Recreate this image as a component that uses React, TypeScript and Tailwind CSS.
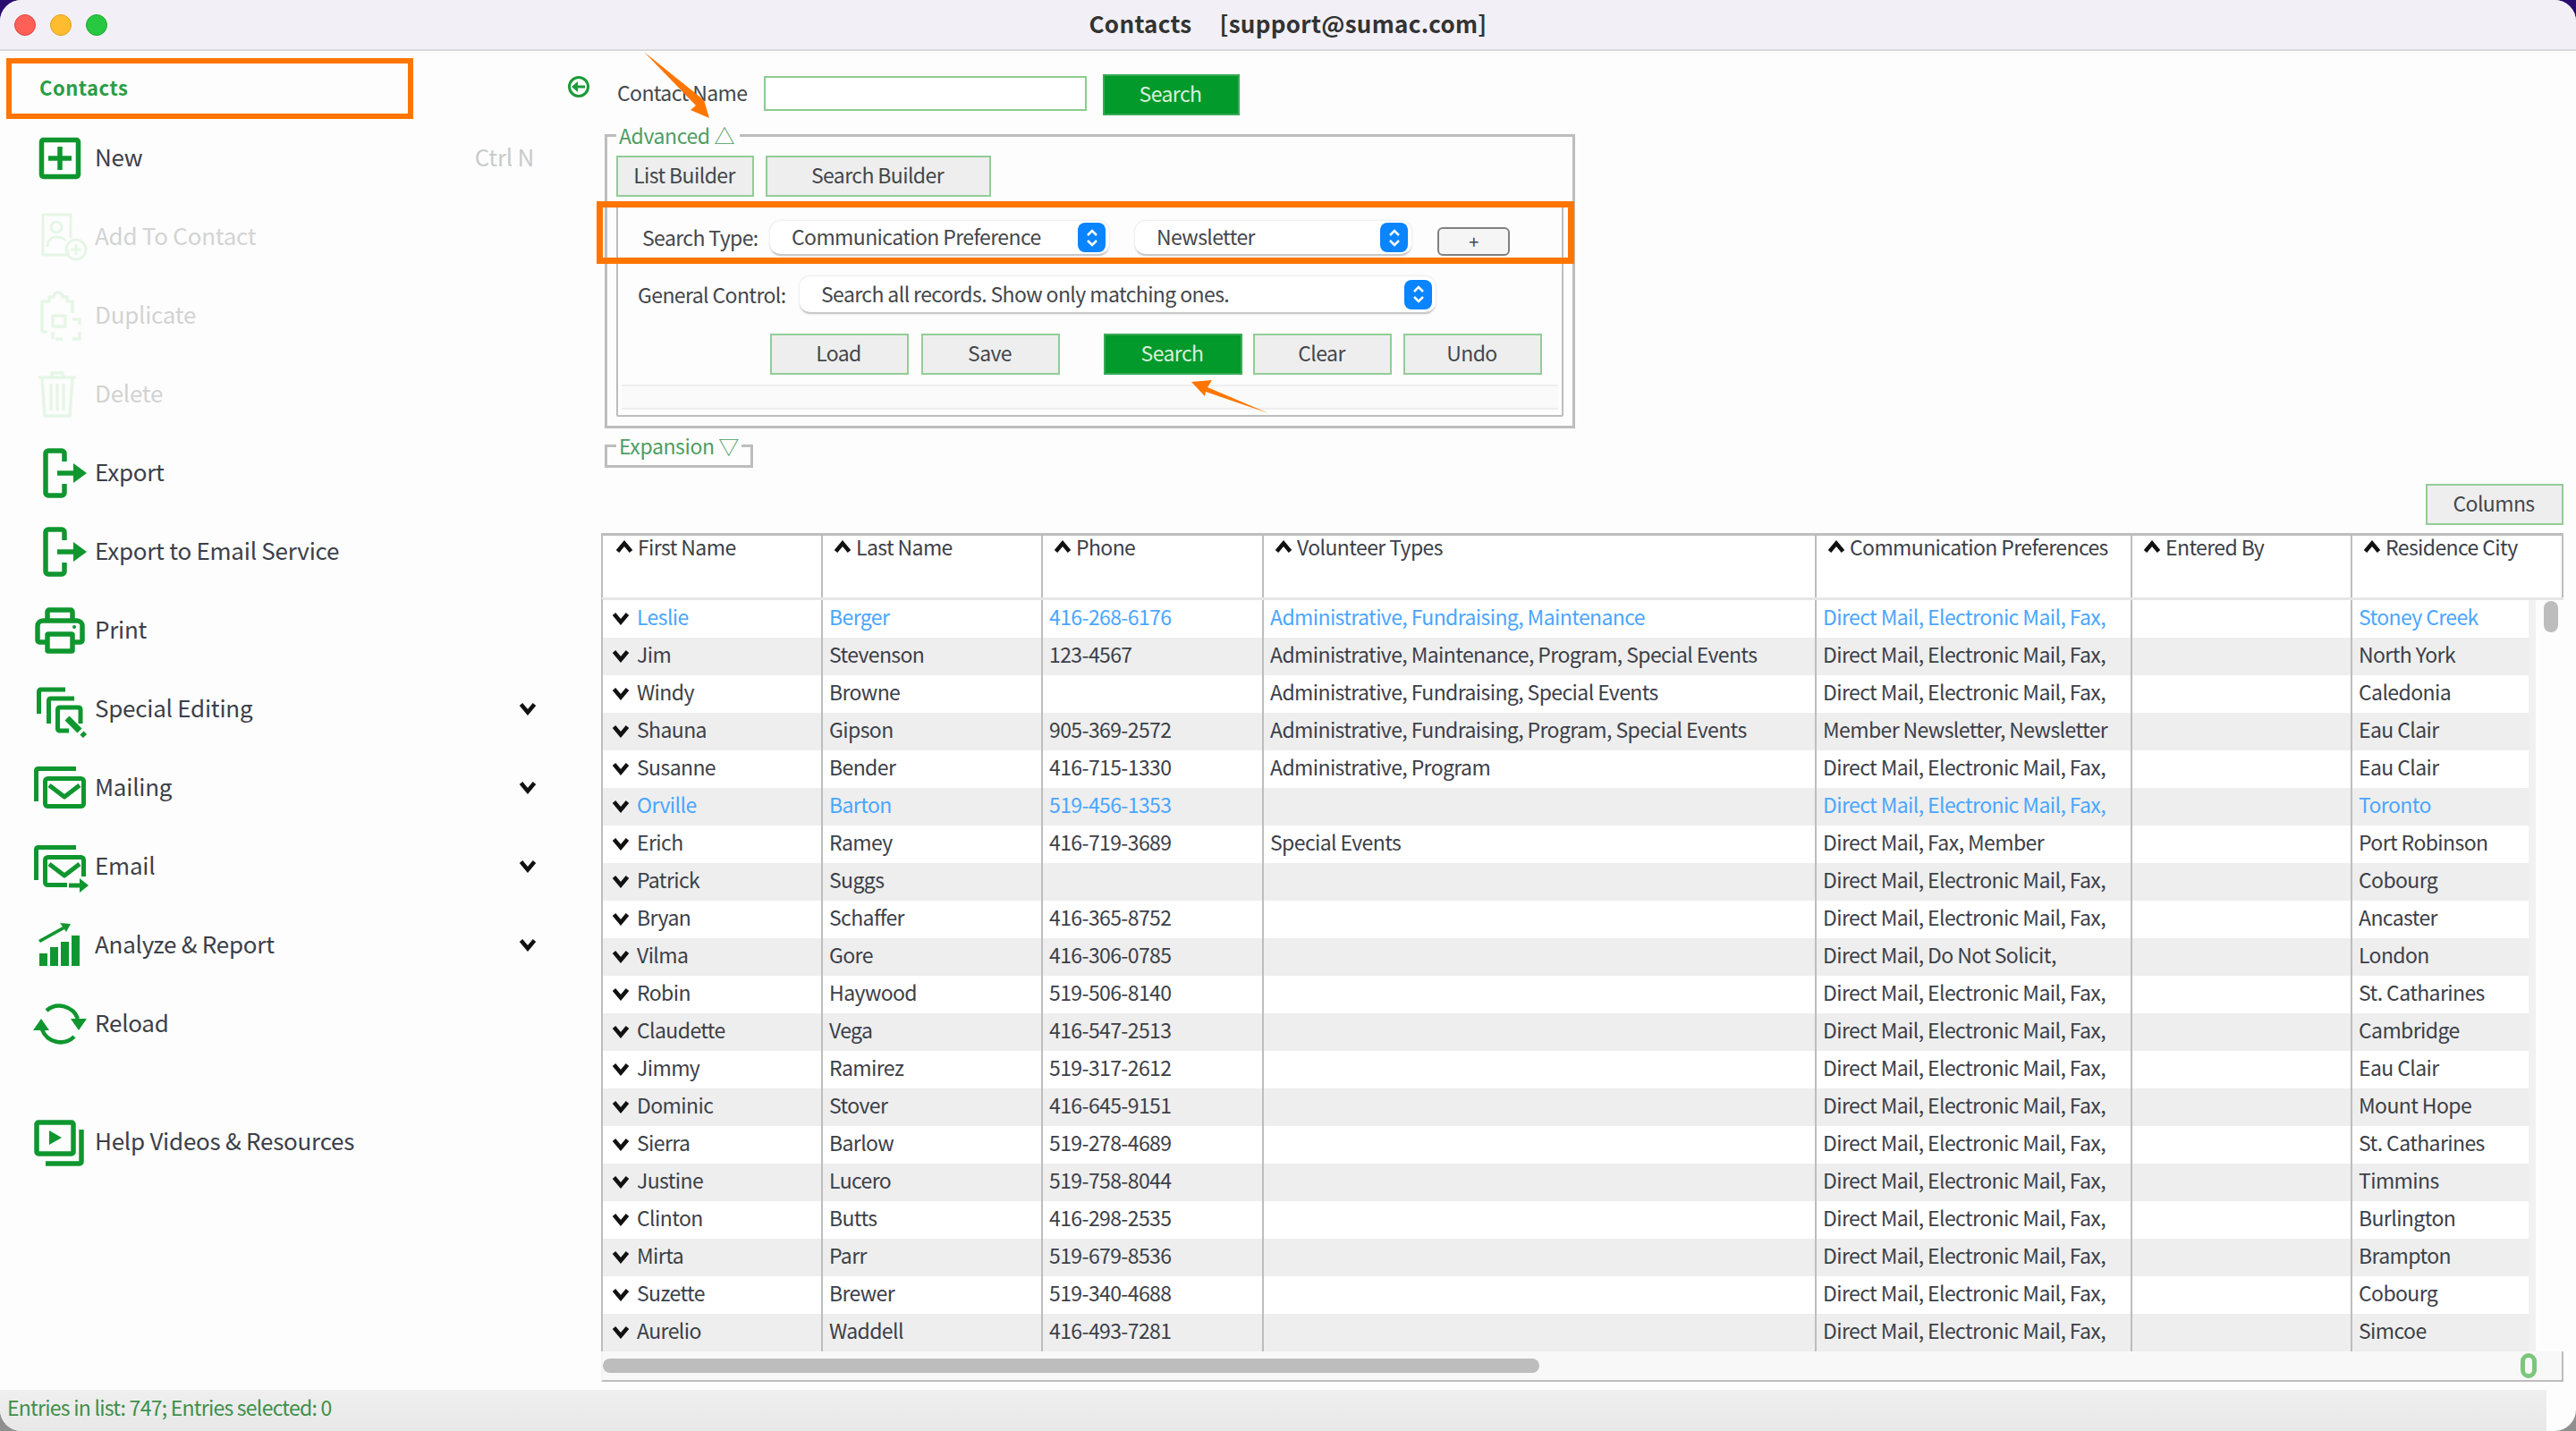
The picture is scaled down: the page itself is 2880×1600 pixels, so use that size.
import React from 'react';

const FONT = "font-['Noto_Sans_CJK_SC','Liberation_Sans',sans-serif]";

type IconProps = { className?: string };

function IconBox({ className, children }: IconProps & { children: React.ReactNode }) {
  return (
    <svg viewBox="0 0 64 64" className={`w-[64px] h-[64px] ${className ?? ''}`} fill="none" stroke="currentColor" strokeWidth="5" strokeLinejoin="round">
      {children}
    </svg>
  );
}

const NewIcon = (p: IconProps) => (
  <IconBox {...p}>
    <rect x="11.5" y="11.5" width="41" height="41" rx="2" strokeWidth="5.5" />
    <path d="M32 19v26M19 32h26" strokeWidth="5.5" />
  </IconBox>
);
const AddContactIcon = (p: IconProps) => (
  <IconBox {...p}>
    <g strokeWidth="3">
      <path d="M41 46v6H13V7h31v26" />
      <circle cx="28" cy="21" r="6" />
      <path d="M18 43c0-8 5-11 10-11s8 1 10 4" />
      <circle cx="50" cy="46" r="11" />
      <path d="M50 40v12M44 46h12" />
    </g>
  </IconBox>
);
const DuplicateIcon = (p: IconProps) => (
  <IconBox {...p}>
    <g strokeWidth="3.5">
      <path d="M12 50V16h8v-5h5a5 5 0 0 1 10 0h5v5h6v13" />
      <path d="M12 50h6M27 58h8M24 32h14v12H24z" />
      <path d="M46 36h8v6M54 50v8h-8M24 50v8" />
    </g>
  </IconBox>
);
const TrashIcon = (p: IconProps) => (
  <IconBox {...p}>
    <g strokeWidth="3.5">
      <path d="M8 13h42M23 12V8h12v4M12 13l3 43h28l3-43" />
      <path d="M22 20v30M29 20v30M36 20v30" />
    </g>
  </IconBox>
);
const ExportIcon = (p: IconProps) => (
  <IconBox {...p}>
    <path d="M37 19V10a3 3 0 0 0-3-3H19a3 3 0 0 0-3 3v44a3 3 0 0 0 3 3h15a3 3 0 0 0 3-3V44" strokeWidth="5.5" />
    <path d="M29 32h20" strokeWidth="5.5" />
    <path d="M47 21l15 11-15 11z" fill="currentColor" stroke="none" />
  </IconBox>
);
const PrintIcon = (p: IconProps) => (
  <IconBox {...p}>
    <g strokeWidth="5.5">
      <path d="M18 20V11a2 2 0 0 1 2-2h24a2 2 0 0 1 2 2v9" />
      <path d="M16 45H9a2 2 0 0 1-2-2V27a6 6 0 0 1 6-6h38a6 6 0 0 1 6 6v16a2 2 0 0 1-2 2h-7" />
      <rect x="18" y="36" width="28" height="19" rx="1" />
    </g>
    <circle cx="48" cy="28" r="2" fill="currentColor" stroke="none" />
  </IconBox>
);
const SpecialIcon = (p: IconProps) => (
  <IconBox {...p}>
    <path d="M8.5 37V12a2 2 0 0 1 2-2H38" />
    <path d="M19.5 48V22a2 2 0 0 1 2-2H48" />
    <path d="M42 56H31.5a2 2 0 0 1-2-2V32a2 2 0 0 1 2-2H53a2 2 0 0 1 2 2v16" />
    <path d="M40 42l14 14" strokeWidth="7" />
    <path d="M56.5 58.5l3.5 3.5" strokeWidth="6" />
  </IconBox>
);
const MailingIcon = (p: IconProps) => (
  <IconBox {...p}>
    <path d="M5.5 47V12.5a2 2 0 0 1 2-2H50" />
    <rect x="15.5" y="21.5" width="43" height="31" rx="3" />
    <path d="M20 29l17 13 17-13" />
  </IconBox>
);
const EmailIcon = (p: IconProps) => (
  <IconBox {...p}>
    <path d="M5.5 47V12.5a2 2 0 0 1 2-2H50" />
    <path d="M40 52.5H18.5a3 3 0 0 1-3-3v-25a3 3 0 0 1 3-3h37a3 3 0 0 1 3 3V43" />
    <path d="M20 29l17 13 17-13" />
    <path d="M42 53h14" />
    <path d="M54 45l10 8-10 8z" fill="currentColor" stroke="none" />
  </IconBox>
);
const AnalyzeIcon = (p: IconProps) => (
  <IconBox {...p}>
    <g fill="currentColor" stroke="none">
      <rect x="9" y="41" width="9" height="14" />
      <rect x="21" y="34" width="9" height="21" />
      <rect x="33" y="28" width="9" height="27" />
      <rect x="45" y="21" width="9" height="34" />
      <path d="M32 7l12 1-5 9-2-3-27 15-2-3 27-15z" />
    </g>
  </IconBox>
);
const ReloadIcon = (p: IconProps) => (
  <IconBox {...p}>
    <path d="M17 17a22 22 0 0 1 35 9" strokeWidth="4.5" />
    <path d="M48 46a22 22 0 0 1-36-8" strokeWidth="4.5" />
    <g fill="currentColor" stroke="none">
      <path d="M44 26h18l-9 13z" />
      <path d="M2 39h18l-9-13z" />
    </g>
  </IconBox>
);
const HelpIcon = (p: IconProps) => (
  <IconBox {...p}>
    <rect x="6" y="10" width="41" height="35" rx="2" strokeWidth="5.5" />
    <path d="M20 19v16l14-8z" fill="currentColor" stroke="none" />
    <path d="M56 18v36a2 2 0 0 1-2 2H16" strokeWidth="5.5" />
  </IconBox>
);

function Chevron({ up, className }: { up?: boolean; className?: string }) {
  return (
    <svg viewBox="0 0 20 14" className={`w-[20px] h-[14px] shrink-0 ${className ?? ''}`} fill="none" stroke="#111" strokeWidth="4.5">
      <path d={up ? 'M2.5 12.5l7.5-9 7.5 9' : 'M2.5 1.5l7.5 9 7.5-9'} />
    </svg>
  );
}

const menu = [
  { label: 'New', Icon: NewIcon, hint: 'Ctrl N' },
  { label: 'Add To Contact', Icon: AddContactIcon, off: true },
  { label: 'Duplicate', Icon: DuplicateIcon, off: true },
  { label: 'Delete', Icon: TrashIcon, off: true },
  { label: 'Export', Icon: ExportIcon },
  { label: 'Export to Email Service', Icon: ExportIcon },
  { label: 'Print', Icon: PrintIcon },
  { label: 'Special Editing', Icon: SpecialIcon, more: true },
  { label: 'Mailing', Icon: MailingIcon, more: true },
  { label: 'Email', Icon: EmailIcon, more: true },
  { label: 'Analyze & Report', Icon: AnalyzeIcon, more: true },
  { label: 'Reload', Icon: ReloadIcon },
];

function MenuItem({ label, Icon, hint, off, more, className }: { label: string; Icon: (p: IconProps) => React.ReactElement; hint?: string; off?: boolean; more?: boolean; className?: string }) {
  return (
    <div className={`h-[88px] flex items-center pl-[35px] text-[26px] tracking-[-0.25px] ${off ? 'text-[#d3d3d3]' : 'text-[#3c4048]'} ${className ?? ''}`}>
      <Icon className={`w-[64px] h-[64px] shrink-0 mr-[7px] ${off ? 'text-[#e6f6e6]' : 'text-[#0f962f]'}`} />
      <span className="pb-[5px]">{label}</span>
      {hint && <span className="ml-auto mr-[28px] pb-[5px] text-[#c8cbcc]">{hint}</span>}
      {more && <Chevron className="ml-auto mr-[25px]" />}
    </div>
  );
}

function Btn({ label, primary, className }: { label: string; primary?: boolean; className?: string }) {
  return (
    <button
      className={`h-[46px] border-2 text-[23px] tracking-[-0.6px] pb-[3px] pr-[2px] flex items-center justify-center shrink-0 ${
        primary ? 'bg-[#029a2a] border-[#3aa957] text-[#d9f0dd]' : 'bg-[#eeeeee] border-[#93cc97] text-[#44474b]'
      } ${className ?? ''}`}
    >
      {label}
    </button>
  );
}

function Select({ value, className }: { value: string; className?: string }) {
  return (
    <div className={`flex items-center bg-white rounded-[12px] border-b-2 border-[#c9c9c9] shadow-[0_0_3px_rgba(0,0,0,0.15)] pl-[24px] pr-[4px] text-[23px] tracking-[-0.6px] text-[#44474b] shrink-0 ${className ?? ''}`}>
      <span className="pb-[2px]">{value}</span>
      <div className="ml-auto w-[31px] h-[33px] rounded-[8px] bg-[#0a84ff] flex items-center justify-center">
        <svg viewBox="0 0 16 24" className="w-[16px] h-[24px]" fill="none" stroke="#fff" strokeWidth="2.5">
          <path d="M3 9l5-5 5 5M3 15l5 5 5-5" />
        </svg>
      </div>
    </div>
  );
}

const columns = [
  { key: 'first', label: 'First Name', w: 'w-[244px]' },
  { key: 'last', label: 'Last Name', w: 'w-[246px]' },
  { key: 'phone', label: 'Phone', w: 'w-[247px]' },
  { key: 'vol', label: 'Volunteer Types', w: 'w-[618px]' },
  { key: 'comm', label: 'Communication Preferences', w: 'w-[353px]' },
  { key: 'by', label: 'Entered By', w: 'w-[246px]' },
  { key: 'city', label: 'Residence City', w: 'flex-1' },
];

const DM = 'Direct Mail, Electronic Mail, Fax,';
const rows: { c: string[]; link?: boolean }[] = [
  { c: ['Leslie', 'Berger', '416-268-6176', 'Administrative, Fundraising, Maintenance', DM, '', 'Stoney Creek'], link: true },
  { c: ['Jim', 'Stevenson', '123-4567', 'Administrative, Maintenance, Program, Special Events', DM, '', 'North York'] },
  { c: ['Windy', 'Browne', '', 'Administrative, Fundraising, Special Events', DM, '', 'Caledonia'] },
  { c: ['Shauna', 'Gipson', '905-369-2572', 'Administrative, Fundraising, Program, Special Events', 'Member Newsletter, Newsletter', '', 'Eau Clair'] },
  { c: ['Susanne', 'Bender', '416-715-1330', 'Administrative, Program', DM, '', 'Eau Clair'] },
  { c: ['Orville', 'Barton', '519-456-1353', '', DM, '', 'Toronto'], link: true },
  { c: ['Erich', 'Ramey', '416-719-3689', 'Special Events', 'Direct Mail, Fax, Member', '', 'Port Robinson'] },
  { c: ['Patrick', 'Suggs', '', '', DM, '', 'Cobourg'] },
  { c: ['Bryan', 'Schaffer', '416-365-8752', '', DM, '', 'Ancaster'] },
  { c: ['Vilma', 'Gore', '416-306-0785', '', 'Direct Mail, Do Not Solicit,', '', 'London'] },
  { c: ['Robin', 'Haywood', '519-506-8140', '', DM, '', 'St. Catharines'] },
  { c: ['Claudette', 'Vega', '416-547-2513', '', DM, '', 'Cambridge'] },
  { c: ['Jimmy', 'Ramirez', '519-317-2612', '', DM, '', 'Eau Clair'] },
  { c: ['Dominic', 'Stover', '416-645-9151', '', DM, '', 'Mount Hope'] },
  { c: ['Sierra', 'Barlow', '519-278-4689', '', DM, '', 'St. Catharines'] },
  { c: ['Justine', 'Lucero', '519-758-8044', '', DM, '', 'Timmins'] },
  { c: ['Clinton', 'Butts', '416-298-2535', '', DM, '', 'Burlington'] },
  { c: ['Mirta', 'Parr', '519-679-8536', '', DM, '', 'Brampton'] },
  { c: ['Suzette', 'Brewer', '519-340-4688', '', DM, '', 'Cobourg'] },
  { c: ['Aurelio', 'Waddell', '416-493-7281', '', DM, '', 'Simcoe'] },
];

function ContactsTable() {
  return (
    <div className="ml-[47px] w-[2194px] mt-[9px] flex flex-col text-[23px] tracking-[-0.6px] text-[#3c4048]">
      <div className="h-[72px] flex border-t-[3px] border-x-2 border-[#bdbdbd] bg-white">
        {columns.map((col, i) => (
          <div key={col.key} className={`${col.w} flex items-start gap-[5px] leading-[24px] ${i > 0 ? 'pl-[12px] border-l-2 border-[#bdbdbd]' : 'pl-[14px]'}`}>
            <Chevron up className="mt-[5px]" />
            <span>{col.label}</span>
          </div>
        ))}
      </div>
      <div className="flex border-t-[3px] border-l-2 border-[#e6e6e6] border-l-[#bdbdbd] bg-white">
        <div className="w-[2153px]">
          {rows.map((row, r) => (
            <div key={r} className={`h-[42px] flex items-center ${r % 2 ? 'bg-[#eeeeee]' : 'bg-white'} ${row.link ? 'text-[#4ba6ff]' : ''}`}>
              {row.c.map((v, i) => (
                <div key={i} className={`${columns[i].w} h-full flex items-center whitespace-nowrap overflow-hidden pb-[5px] ${i === 0 ? 'pl-[10px] gap-[8px]' : 'border-l-2 border-[#bdbdbd] pl-[7px]'}`}>
                  {i === 0 && <Chevron className="mt-[4px]" />}
                  {v}
                </div>
              ))}
            </div>
          ))}
        </div>
        <div className="flex-1 border-l-[8px] border-[#f1f1f1] pl-[9px] pt-[1px] bg-[#fdfdfd]">
          <div className="w-[16px] h-[35px] rounded-full bg-[#bdbdbd]" />
        </div>
      </div>
      <div className="h-[34px] flex items-center border-x-2 border-b-2 border-x-[#f4f4f4] border-r-[#bdbdbd] border-b-[#bdbdbd] bg-[#f8f8f8] pr-[28px]">
        <div className="w-[1047px] h-[16px] rounded-full bg-[#bdbdbd]" />
        <div className="ml-auto w-[18px] h-[28px] rounded-full border-[5px] border-[#7bc67b]" />
      </div>
    </div>
  );
}

export default function App() {
  return (
    <div className={`relative w-[2880px] h-[1600px] bg-[linear-gradient(#2a0c70_50%,#8f8f8f_50%)] ${FONT}`}>
      <div className="w-full h-full flex flex-col rounded-[24px] overflow-hidden bg-[#fdfdfd]">
        {/* title bar */}
        <div className="h-[57px] shrink-0 flex items-center bg-[#f2f0f6] border-b-2 border-[#d9d9d9] relative pl-[16px] gap-[16px]">
          <div className="w-[24px] h-[24px] rounded-full bg-[#fe5f57] border border-[#e2463f]" />
          <div className="w-[24px] h-[24px] rounded-full bg-[#febc2e] border border-[#df9f20]" />
          <div className="w-[24px] h-[24px] rounded-full bg-[#28c840] border border-[#1eaa32]" />
          <div className="absolute inset-0 flex items-center justify-center text-[26px] font-bold text-[#333] whitespace-pre pb-[5px] tracking-[0.3px]">
            Contacts{'     '}[support@sumac.com]
          </div>
        </div>

        <div className="flex-1 flex min-h-0">
          {/* sidebar */}
          <aside className="w-[625px] shrink-0 pt-[8px]">
            <div className="ml-[7px] w-[455px] h-[68px] border-[6px] border-[#ff7500] flex items-center pl-[31px] pb-[3px] text-[22px] font-bold text-[#2a9d45] tracking-[0.5px]">
              Contacts
            </div>
            {menu.map(m => (
              <MenuItem key={m.label} {...m} />
            ))}
            <MenuItem label="Help Videos &amp; Resources" Icon={HelpIcon} className="mt-[44px]" />
          </aside>

          {/* main panel */}
          <main className="flex-1 min-w-0">
            <div className="flex pt-[26px] text-[23px] tracking-[-0.6px] text-[#44474b]">
              <svg viewBox="0 0 26 26" className="w-[26px] h-[26px] ml-[9px] mt-[1px] shrink-0" fill="none" stroke="#1c9a3a" strokeWidth="3">
                <circle cx="13" cy="13" r="10.5" />
                <path d="M7 13h13" />
                <path d="M12 7l-7 6 7 6z" fill="#1c9a3a" stroke="none" />
              </svg>
              <span className="ml-[30px] w-[164px] leading-[40px]">Contact Name</span>
              <div className="w-[361px] h-[39px] mt-[2px] border-2 border-[#8ccb90] bg-white" />
              <Btn label="Search" primary className="ml-[18px] w-[153px]" />
            </div>

            <fieldset className="ml-[51px] w-[1085px] mt-[7px] border-[3px] border-[#bdbdbd] px-[10px] pb-[10px]">
              <legend className="px-[3px] pr-[6px] text-[23px] tracking-[-0.4px] leading-[30px] whitespace-nowrap text-[#4f9d63]">Advanced △</legend>
              <div className="flex gap-[13px] mt-[8px]">
                <Btn label="List Builder" className="w-[154px]" />
                <Btn label="Search Builder" className="w-[252px]" />
              </div>
              <div className="mt-[10px] h-[236px] border-2 border-[#bdbdbd] rounded-[2px] text-[23px] tracking-[-0.6px] text-[#44474b] whitespace-nowrap">
                <div className="flex items-center pt-[15px] pl-[27px]">
                  <span className="w-[143px] pb-[2px]">Search Type:</span>
                  <Select value="Communication Preference" className="w-[379px] h-[39px]" />
                  <Select value="Newsletter" className="w-[309px] h-[39px] ml-[29px]" />
                  <button className="ml-[29px] w-[81px] h-[32px] mt-[6px] border-2 border-[#808080] rounded-[6px] bg-[#f5f5f5] text-[20px] leading-none">+</button>
                </div>
                <div className="flex items-center mt-[23px] pl-[22px]">
                  <span className="w-[181px] pb-[2px]">General Control:</span>
                  <Select value="Search all records. Show only matching ones." className="w-[711px] h-[42px]" />
                </div>
                <div className="flex items-center mt-[22px] pl-[170px]">
                  <Btn label="Load" className="w-[155px]" />
                  <Btn label="Save" className="w-[155px] ml-[14px]" />
                  <Btn label="Search" primary className="w-[155px] ml-[49px]" />
                  <Btn label="Clear" className="w-[155px] ml-[12px]" />
                  <Btn label="Undo" className="w-[155px] ml-[13px]" />
                </div>
                <div className="mt-[11px] mx-[4px] h-[28px] bg-[#fafafa] border-y-2 border-[#eeeeee]" />
              </div>
            </fieldset>

            <fieldset className="ml-[51px] w-[159px] h-[40px] mt-[4px] border-[3px] border-[#bdbdbd] px-[10px]">
              <legend className="px-[3px] text-[23px] tracking-[-0.4px] leading-[30px] whitespace-nowrap text-[#4f9d63]">Expansion ▽</legend>
            </fieldset>

            <div className="flex justify-end mr-[14px] mt-[18px]">
              <Btn label="Columns" className="w-[154px]" />
            </div>

            <ContactsTable />
          </main>
        </div>

        {/* status bar */}
        <div className="h-[46px] shrink-0 w-[2847px] flex items-center pl-[8px] pb-[8px] bg-[linear-gradient(#efefef,#e8e8e8)] text-[23px] text-[#3f8f4a] tracking-[-0.75px]">
          Entries in list: 747; Entries selected: 0
        </div>
      </div>

      {/* annotations drawn on top of the screenshot */}
      <div className="absolute left-[667px] top-[225px] w-[1093px] h-[70px] border-[7px] border-[#ff7500] pointer-events-none" />
      <svg viewBox="0 0 2880 1600" className="absolute inset-0 w-[2880px] h-[1600px] pointer-events-none" fill="#ff7500">
        <path d="M720 58L787 112 793 132 772 123 778 118Z" />
        <path d="M1332 427L1355 425 1350 433 1418 462 1348 438 1347 443Z" />
      </svg>
    </div>
  );
}
